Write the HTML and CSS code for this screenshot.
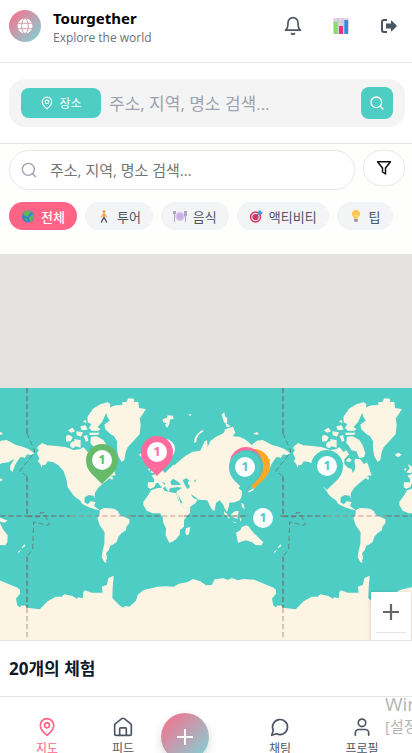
FILE: index.html
```html
<!DOCTYPE html>
<html lang="ko">
<head>
<meta charset="utf-8">
<meta name="viewport" content="width=device-width, initial-scale=1">
<title>Tourgether</title>
<link rel="stylesheet" href="styles.css">
</head>
<body>
<div class="app">
  <header class="header">
    <div class="logo">
      <svg width="16" height="16" viewBox="0 0 16 16"><circle cx="8" cy="8" r="7.5" fill="#fff"/><g fill="none" stroke="#d2a0ad" stroke-width="1"><ellipse cx="8" cy="8" rx="3.3" ry="7.5"/><path d="M.5 5.3h15M.5 10.7h15"/></g></svg>
    </div>
    <div class="brand">
      <h1>Tourgether</h1>
      <p>Explore the world</p>
    </div>
    <div class="actions">
      <button class="icon-button" aria-label="알림"><svg width="20" height="20" viewBox="0 0 24 24" class="line"><path d="M6 8a6 6 0 0 1 12 0c0 7 3 9 3 9H3s3-2 3-9M10.3 21a2 2 0 0 0 3.4 0"/></svg></button>
      <button class="icon-button" aria-label="통계"><svg width="16" height="16" viewBox="0 0 16 16"><rect width="16" height="16" rx="1" fill="#ddd7e3"/><path d="M0 4h16M0 8h16M0 12h16M4.5 0v16M10 0v16" stroke="#c1bbca" stroke-width=".6"/><path fill="#86dc6f" d="M1 4h3.5v12H1z"/><path fill="#e3367c" d="M6 8h4v8H6z"/><path fill="#338de0" d="M11.300 2H15v14h-3.700z"/></svg></button>
      <button class="icon-button" aria-label="로그아웃"><svg width="18" height="16" viewBox="0 0 18 16"><path d="M7 2H4Q2 2 2 4v8q0 2 2 2h3" fill="none" stroke="#4b5563" stroke-width="2"/><path d="M6 5.500h5V3.200q0-1.200 1-.3l4.600 4.500q.6.600 0 1.200L12 13.100q-1 .9-1-.3v-2.300H6z" fill="#4b5563"/></svg></button>
    </div>
  </header>

  <form class="place-search">
    <div class="place-bar">
      <button type="button" class="place-button"><svg width="14" height="14" viewBox="0 0 24 24" class="line"><path d="M20 10c0 6-8 12-8 12S4 16 4 10a8 8 0 0 1 16 0Z"/><circle cx="12" cy="10" r="3"/></svg>장소</button>
      <input type="text" aria-label="장소 검색" placeholder="주소, 지역, 명소 검색...">
      <button type="button" class="go-button" aria-label="검색"><svg width="16" height="16" viewBox="0 0 24 24" class="line"><circle cx="11" cy="11" r="8"/><path d="m21 21-4.300-4.300"/></svg></button>
    </div>
  </form>

  <section class="filters">
    <div class="filter-row">
      <label class="search-field">
        <svg width="16" height="16" viewBox="0 0 24 24" class="line"><circle cx="11" cy="11" r="9"/><path d="m22 22-4.500-4.500"/></svg>
        <input type="text" aria-label="체험 검색" placeholder="주소, 지역, 명소 검색...">
      </label>
      <button class="filter-button" aria-label="필터"><svg width="16" height="16" viewBox="0 0 16 16"><path d="M1.500 1.800h13L9.500 8v6L6.500 12V8z" fill="none" stroke="#111" stroke-width="1.500" stroke-linejoin="round"/></svg></button>
    </div>
    <div class="chips">
      <button class="chip chip-on"><svg width="14" height="14" viewBox="0 0 14 14"><circle cx="7" cy="7.500" r="6" fill="#2b86d4"/><path d="M3 3q3-2.500 6-1l1 2-2 1-1 3-3-1-2-2zM8 8l4-3 .8 3-2 4-2 .5zM3 9l3 1 0 2.500z" fill="#63b55a"/></svg>전체</button>
      <button class="chip"><svg width="14" height="14" viewBox="0 0 14 14" fill="none" stroke-linecap="round"><circle cx="7" cy="2.500" r="1.500" fill="#dca15c"/><path d="M7 5.500v2.500" stroke="#f3a02c" stroke-width="2.500"/><path d="M5.500 6 4 8M8.500 6l1.500 2" stroke="#dca15c"/><path d="m6.500 9-2 4M7.500 9l2 4" stroke="#50547a" stroke-width="1.500"/></svg>투어</button>
      <button class="chip"><svg width="14" height="14" viewBox="0 0 14 14"><circle cx="7" cy="7.500" r="4.700" fill="#d7c8ef"/><circle cx="7" cy="7.500" r="3" fill="#c5b0e3"/><path d="M1.500 2v11M.5 2v3h2V2M12.500 2v11M11.500 2v5h2V2" fill="none" stroke="#b3a6c0"/></svg>음식</button>
      <button class="chip"><svg width="14" height="14" viewBox="0 0 14 14"><circle cx="6.500" cy="8" r="5.700" fill="#d83863"/><circle cx="6.500" cy="8" r="3.700" fill="none" stroke="#f4d8e0" stroke-width="1.200"/><path d="m6 8.500 5-5" stroke="#585b85"/><path d="m9 5 .5-3 2-1 .5 2 2 .5-1.500 2z" fill="#329be4"/></svg>액티비티</button>
      <button class="chip"><svg width="14" height="14" viewBox="0 0 14 14"><path d="M5 10Q5 8.500 4 7.500A4 4 0 1 1 10 7.500Q9 8.500 9 10z" fill="#fcc84c"/><path d="M5 10h4v2L8 13H6l-1-1z" fill="#a79aae"/><path d="m6 6 1 1 1-1v4" fill="none" stroke="#fff0a5" stroke-width=".8"/></svg>팁</button>
    </div>
  </section>

  <main class="map">
    <svg class="map-canvas" viewBox="0 0 412 386" preserveAspectRatio="xMinYMin slice" role="img" aria-label="세계 지도">
      <defs>
        <g id="world">
          <g fill="#fdf5e3">
            <path d="M29 196L36 186 30 181 34 174 46 165 60 172 90 174 118 178 140 186 158 184 170 178 182 192 190 187 198 199 184 214 184 228 196 240 206 243 209 255 215 246 217 234 214 219 218 212 232 214 243 229 252 223 258 238 262 251 266 262 250 264 258 268 256 276 248 270 236 280 226 288 213 300 204 314 203 326 206 334 199 323 186 321 173 328 172 343 183 349 191 340 206 342 201 353 214 364 222 368 204 364 186 358 166 348 158 336 144 327 134 315 128 302 137 318 122 298 118 274 110 250 94 232 78 222 62 220 56 230 46 232 44 240 40 228 32 219 38 212z"/>
            <path d="M237 66L251 57 267 52 287 50 285 42 298 42 304 31 320 32 322 42 334 41 336 60 357 63 345 82 338 91 341 110 338 138 322 156 302 178 296 192 292 216 284 222 274 205 270 184 270 160 260 143 250 138 235 124 232 110 248 98 240 84z"/>
            <path d="M181 87L198 62 220 49 242 43 250 48 248 64 235 80 225 102 212 117 220 123 213 129 195 128 186 120 193 108 182 103z"/>
            <path d="M192 146L209 145 230 157 240 174 247 195 243 207 229 211 220 190 205 187 198 174 190 165zM130 165L142 159 143 153 161 157 161 179 146 175 138 181 130 176zM117 145L125 140 137 147 132 159 117 161zM160 115L176 112 182 125 164 127zM122 127L137 119 144 130 133 134zM148 130L168 133 162 146 149 142zM170 145L180 140 184 158 177 161zM186 134L218 134 214 140 189 141zM168 100L176 95 178 106zM188 219L200 223 206 216 198 209zM337 198L347 194 356 200 347 207 338 204z"/>
            <path d="M219 367L229 360 247 361 261 362 272 369 279 382 291 386 307 394 307 406 298 416 297 427 285 434 274 446 269 461 260 469 249 474 246 485 237 496 241 510 236 519 240 524 232 523 224 507 227 488 232 468 233 433 226 423 218 412 211 390 217 382z"/>
            <path d="M362 298L363 283 381 283 381 272 373 263 386 258 399 246 414 238 430 240 437 226 442 232 460 216 475 204 497 191 520 188 532 161 540 156 542 177 550 159 566 147 589 136 595 124 618 116 625 134 617 145 638 146 657 156 674 171 690 158 707 156 735 171 755 176 772 183 790 196 780 201 768 199 762 209 748 207 733 229 724 253 717 244 718 232 731 212 712 223 691 226 676 240 682 258 668 272 656 278 661 303 652 307 642 293 634 300 645 309 644 325 638 337 623 343 607 344 606 355 600 372 592 359 589 350 578 337 567 345 562 370 552 361 541 337 514 335 502 325 490 318 500 331 512 335 505 346 483 361 474 364 462 347 448 322 449 310 459 304 465 299 452 297 428 301 426 312 416 300 414 285 404 281 416 293 407 302 393 284 387 286 382 297 370 302z"/>
            <path d="M349 351L349 341 362 324 372 307 390 301 407 299 412 308 432 313 447 316 452 332 466 352 471 360 490 358 489 374 471 396 471 416 459 426 458 440 447 454 437 461 427 464 420 451 416 441 417 421 409 405 407 388 399 376 377 376 359 368z"/>
            <path d="M477 421L490 417 486 439 479 442 475 434zM627 434L640 427 644 417 658 412 668 417 674 404 687 405 696 424 710 442 709 462 703 472 686 471 674 462 656 457 633 464zM591 369L608 386 607 393 592 379zM612 379L625 369 635 369 631 393 618 388zM638 389L644 393 640 401zM668 384L690 390 710 398 700 404 676 398zM752 478L761 469 763 474 754 481zM741 491L751 484 746 491 741 495zM614 400L627 403 626 406zM643 344L650 349 653 364 645 357zM662 311L676 303 683 296 679 307 667 313zM683 269L697 276 687 280zM678 138L688 132 695 136 692 140 682 139zM407 93L419 90 422 82 438 83 440 92 429 95 427 107 421 120 414 111 419 105 408 103zM584 80L592 72 594 85 601 91 600 107 591 103 587 90zM595 106L607 111 608 118 599 117zM483 80L493 78 491 84zM370 253L380 242 375 229 385 234 392 250 381 256zM362 244L370 239 368 249z"/>
            <path d="M501 165Q499 143 526 126L530 130Q507 143 508 162z"/>
            <path d="M-81 578L-56 588-31 598-21 606-22 619-33 631-29 653-22 659-16 652 0 659 38 664 62 640 86 626 104 626 112 619 136 624 150 632 154 628 167 631 169 612 174 607 194 614 227 614 224 596 240 590 244 570 260 563 257 600 256 630 279 653 289 659 294 654 307 656 327 638 332 620 350 606 376 600 390 596 415 595 440 596 456 587 482 582 498 573 520 580 537 592 554 591 563 574 590 571 602 576 615 570 632 577 650 573 682 575 704 585 730 598 745 604 747 616 735 630 735 650 746 658 761 652 768 659V780H-81z"/>
          </g>
          <g fill="#4ecdc4"><path d="M430 281L438 272 454 282 462 290 444 292 433 290zM467 277L478 270 487 278 482 284 489 296 482 304 474 292zM501 278L508 274 504 284zM452 318L467 346 461 346z"/></g>
          <path d="M0 384H130M310 384H405M472 384H768" class="border-line"/>
          <path d="M130 384H310M405 384H472" class="border-line border-pale"/>
          <path d="M0 0V136M0 266V386M0 506V660" class="border-line"/>
          <path d="M0 660V768" class="border-line border-pale"/>
          <path d="M0 136L24 191-21 248 0 266M0 386H39V374H51L67 408 64 412 20 402 17 484 0 506" class="border-thin"/>
        </g>
        <path id="pin" d="M0-16A16 16 0 0 1 16 0C16 12 7 16 0 24C-7 16-16 12-16 0A16 16 0 0 1 0-16z"/>
      </defs>
      <path fill="#4ecdc4" d="M0 134H412V386H0z"/>
      <g transform="translate(0 134) scale(.333333)">
        <use href="#world" x="-687"/><use href="#world" x="81"/><use href="#world" x="849"/>
      </g>
      <g class="pins" text-anchor="middle">
        <g fill="#66bb6a"><use href="#pin" x="102" y="206"/><circle cx="102" cy="206" r="10" fill="#fff"/><text x="102" y="210">1</text></g>
        <g fill="#4ecdc4"><use href="#pin" x="165" y="195"/><circle cx="165" cy="195" r="10" fill="#fff"/></g>
        <g fill="#ff6b9d"><use href="#pin" x="157" y="198"/><circle cx="157" cy="198" r="10" fill="#fff"/><text x="157" y="202">1</text></g>
        <use href="#pin" x="254" y="211" fill="#ffa726"/><use href="#pin" x="246" y="209" fill="#ff6b9d"/><use href="#pin" x="247" y="212" fill="#52bdb8"/>
        <g fill="#4ecdc4"><use href="#pin" x="245" y="213"/><circle cx="245" cy="213" r="10" fill="#fff"/><text x="245" y="217">1</text></g>
        <g fill="#4ecdc4"><use href="#pin" x="327" y="212"/><circle cx="327" cy="212" r="10" fill="#fff"/><text x="327" y="216">1</text></g>
        <g fill="#4ecdc4"><use href="#pin" x="263" y="264"/><circle cx="263" cy="264" r="10" fill="#fff"/><text x="263" y="268">1</text></g>
      </g>
    </svg>
    <button class="zoom-in" aria-label="확대"><svg width="18" height="18" viewBox="0 0 18 18"><path d="M9 1v16M1 9h16" stroke="#666" stroke-width="2.200"/></svg></button>
  </main>

  <section class="results"><h2>20개의 체험</h2></section>

  <nav class="tabs">
    <a href="#map" class="tab tab-on"><svg width="20" height="20" viewBox="0 0 24 24" class="line"><path d="M20 10c0 6-8 12-8 12S4 16 4 10a8 8 0 0 1 16 0Z"/><circle cx="12" cy="10" r="3"/></svg>지도</a>
    <a href="#feed" class="tab"><svg width="20" height="20" viewBox="0 0 24 24" class="line"><path d="M2 10q0-1 1-2l7.500-6q1.500-1 3 0L21 8q1 1 1 2v10a2 2 0 0 1-2 2H4a2 2 0 0 1-2-2z"/><path d="M8 22v-8q0-1 1-1h6q1 0 1 1v8"/></svg>피드</a>
    <button class="add" aria-label="추가"><svg width="16" height="16" viewBox="0 0 16 16"><path d="M8 0v16M0 8h16" stroke="#fff" stroke-width="2"/></svg></button>
    <a href="#chat" class="tab"><svg width="20" height="20" viewBox="0 0 24 24" class="line"><path d="M7.900 20A9 9 0 1 0 4 16.100L2 22Z"/></svg>채팅</a>
    <a href="#profile" class="tab"><svg width="20" height="20" viewBox="0 0 24 24" class="line"><circle cx="12" cy="7" r="4.500"/><path d="M4 22v-3a4 4 0 0 1 4-4h8a4 4 0 0 1 4 4v3"/></svg>프로필</a>
  </nav>
  <div class="watermark"><p>Win</p><span>[설정</span></div>
</div>
</body>
</html>
```
FILE: styles.css
```css
* { box-sizing: border-box; }
html { height: 100%; overflow: hidden; }
body {
  margin: 0;
  height: 100%;
  overflow: hidden;
  font-family: "Open Sans", "Noto Sans CJK KR", sans-serif;
  color: #4b5563;
  background: #fff;
}
button, input { font: inherit; border: 0; margin: 0; }
button { padding: 0; cursor: pointer; display: flex; align-items: center; justify-content: center; color: inherit; }
input { outline: 0; background: none; min-width: 0; padding: 0; }
svg { display: block; flex: none; }
h1, h2, p { margin: 0; }
.line { fill: none; stroke: currentColor; stroke-width: 2; stroke-linecap: round; stroke-linejoin: round; }

.app { position: relative; display: flex; flex-direction: column; height: calc(100vh + 12px); }

.header { display: flex; align-items: center; height: 63px; padding: 0 7px 10px 9px; border-bottom: 1px solid #e5e7eb; }
.logo { display: grid; place-items: center; width: 32px; height: 32px; border-radius: 50%; background: linear-gradient(135deg, #ff6b8a, #79d8d9); }
.brand { margin-left: 12px; padding-top: 3px; }
.brand h1 { font: 700 15px/20px "Noto Sans", sans-serif; color: #000; }
.brand p { font-size: 12px; line-height: 20px; color: #6b7280; }
.actions { display: flex; gap: 16px; margin-left: auto; }
.icon-button { width: 32px; height: 32px; background: none; }

.place-search { padding: 16px 7px 16px 9px; border-bottom: 1px solid #e5e7eb; }
.place-bar { display: flex; align-items: center; height: 48px; padding: 0 12px; border-radius: 16px; background: #f4f4f4; }
.place-button { gap: 5px; width: 80px; height: 30px; border-radius: 8px; background: #4ecdc4; color: #fff; font-size: 12px; }
.place-bar input { flex: 1; margin-left: 8px; font-size: 17px; }
.place-bar input::placeholder { color: #9ca3af; opacity: 1; }
.go-button { width: 32px; height: 32px; border-radius: 8px; background: #4ecdc4; color: #fff; }

.filters { padding: 6px 7px 24px 9px; background: #fefefc; }
.filter-row { display: flex; align-items: flex-start; gap: 8px; }
.search-field { flex: 1; display: flex; align-items: center; gap: 13px; height: 40px; padding: 0 11px; border: 1px solid #e5e7eb; border-radius: 20px; background: #fff; color: #9ca3af; }
.search-field input { flex: 1; font-size: 15px; }
.search-field input::placeholder { color: #757575; opacity: 1; }
.filter-button { width: 42px; height: 36px; border: 1px solid #e5e7eb; border-radius: 18px; background: #fff; }
.chips { display: flex; gap: 8px; margin-top: 12px; }
.chip { gap: 6px; height: 28px; padding: 0 12px; border-radius: 14px; background: #f3f4f6; font-size: 13px; white-space: nowrap; }
.chip-on { background: #ff6385; color: #fff; font-weight: 500; }

.map { position: relative; flex: 1; min-height: 0; overflow: hidden; background: #e5e3df; }
.map-canvas { width: 100%; height: 100%; }
.border-line, .border-thin { fill: none; stroke: #736866; stroke-opacity: .7; stroke-width: 5; stroke-dasharray: 16 8; }
.border-thin { stroke-width: 3; }
.border-pale { stroke: #c77a78; stroke-opacity: .5; }
.pins { font: 700 13px "Open Sans", sans-serif; }
.zoom-in { position: absolute; right: 1px; bottom: 0; width: 40px; height: 48px; padding-bottom: 8px; background: #fff; box-shadow: 0 1px 4px rgba(0, 0, 0, .2); }
.zoom-in::after { content: ""; position: absolute; left: 5px; right: 5px; bottom: 7px; height: 1px; background: #e6e6e6; }

.results { height: 56px; padding: 0 9px; border-top: 1px solid #e5e7eb; }
.results h2 { font-size: 17px; line-height: 56px; font-weight: 700; color: #111827; }

.tabs { display: grid; grid-template-columns: 76fr 76fr 78fr 82fr 82fr; height: 69px; padding: 16px 9px 0; border-top: 1px solid #e5e7eb; }
.tab { display: flex; flex-direction: column; align-items: center; gap: 4px; padding-top: 4px; font-size: 12px; line-height: 16px; color: #4b5563; text-decoration: none; }
.tab-on { color: #ff6385; }
.add { width: 48px; height: 48px; border-radius: 50%; background: linear-gradient(135deg, #ff6b8a, #79d8d9); box-shadow: 0 4px 10px rgba(0, 0, 0, .15); }

.watermark { position: absolute; left: calc(100% - 27px); bottom: 29px; width: 27px; overflow: hidden; white-space: nowrap; color: #b5b5b5; font-size: 15px; line-height: 20px; pointer-events: none; }
.watermark p { font-size: 19px; line-height: 24px; }
```
